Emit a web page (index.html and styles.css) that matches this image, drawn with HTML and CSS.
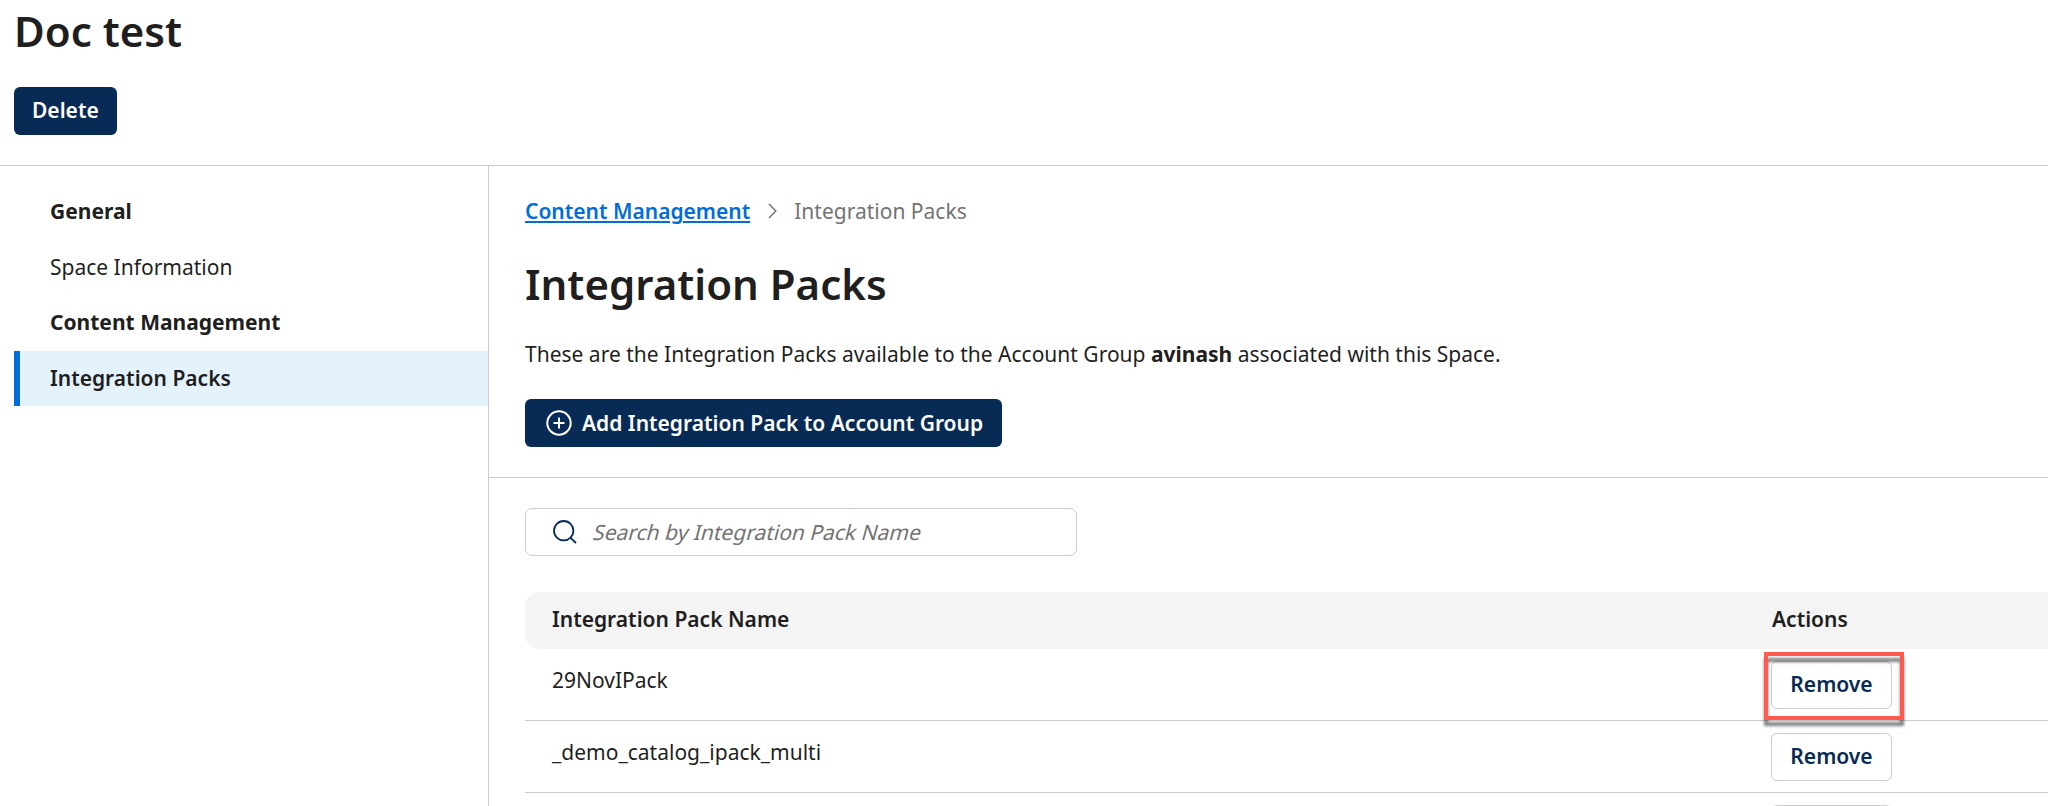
FILE: index.html
```html
<!DOCTYPE html>
<html lang="en">
<head>
<meta charset="utf-8">
<title>Doc test</title>
<link rel="stylesheet" href="styles.css">
</head>
<body>
<header class="page-header">
  <h1 class="title">Doc test</h1>
  <button class="btn btn-primary">Delete</button>
</header>
<div class="layout">
  <nav class="sidebar">
    <div class="nav-item nav-heading">General</div>
    <div class="nav-item">Space Information</div>
    <div class="nav-item nav-heading">Content Management</div>
    <div class="nav-item nav-selected">Integration Packs</div>
  </nav>
  <main class="main">
    <section class="intro">
      <div class="breadcrumb">
        <a class="crumb-link" href="#">Content Management</a>
        <svg class="chevron" width="9" height="16" viewBox="0 0 9 16"><path d="M1 1l6.8 7L1 15"/></svg>
        <span>Integration Packs</span>
      </div>
      <h2 class="title section-title">Integration Packs</h2>
      <p class="description">These are the Integration Packs available to the Account Group <b>avinash</b> associated with this Space.</p>
      <button class="btn btn-primary btn-add">
        <svg class="plus" width="26" height="26" viewBox="0 0 26 26"><circle cx="13" cy="13" r="11.7"/><path d="M13 7.5v11M7.5 13h11"/></svg>
        <span>Add Integration Pack to Account Group</span>
      </button>
    </section>
    <section class="listing">
      <div class="search">
        <svg class="magnifier" width="24" height="24" viewBox="0 0 24 24"><circle cx="10.7" cy="10.7" r="9.7"/><path d="M17.5 17.8L23 23"/></svg>
        <span class="placeholder">Search by Integration Pack Name</span>
      </div>
      <div class="table">
        <div class="row row-head"><span>Integration Pack Name</span><span class="actions-head">Actions</span></div>
        <div class="row"><span class="name">29NovIPack</span><div class="action"><button class="btn btn-outline">Remove</button><div class="highlight"></div></div></div>
        <div class="row"><span class="name">_demo_catalog_ipack_multi</span><div class="action"><button class="btn btn-outline">Remove</button></div></div>
        <div class="row"><span class="name"></span><div class="action"><button class="btn btn-outline"></button></div></div>
      </div>
    </section>
  </main>
</div>
</body>
</html>
```
FILE: styles.css
```css
* { box-sizing: border-box; }
html, body { height: 806px; overflow: hidden; }
body {
  margin: 0;
  display: flex;
  flex-direction: column;
  background: #fff;
  color: #1f1f1f;
  font: 400 21px/28px "Noto Sans", sans-serif;
}
.page-header {
  height: 166px;
  flex: none;
  padding: 3px 14px 0;
  border-bottom: 1px solid #ccc;
}
.title { margin: 0; font-size: 42px; line-height: 56px; font-weight: 600; }
.btn {
  display: flex;
  align-items: center;
  height: 48px;
  border: 0;
  border-radius: 6px;
  font: 600 21px/28px "Noto Sans", sans-serif;
  white-space: nowrap;
}
.btn-primary { margin-top: 28px; padding: 0 18px 2px; background: #072b55; color: #fff; }
.btn-outline { width: 121px; justify-content: center; padding: 0 0 2px; border: 1px solid #ccc; background: #fff; color: #072b55; }
.layout { display: flex; flex: 1; min-height: 0; overflow: hidden; }
.sidebar { width: 489px; flex: none; padding: 18px 0 0 14px; border-right: 1px solid #ccc; }
.nav-item { height: 55.6px; padding: 13.4px 0 0 36px; }
.nav-heading { padding-top: 13px; font-weight: 700; }
.nav-selected {
  height: 55px;
  padding-left: 30px;
  border-left: 6px solid #006dda;
  background: #e4f2fc;
  font-weight: 600;
}
.main { flex: 1; min-width: 0; overflow: hidden; }
.intro { height: 312px; padding: 31px 36px 0; border-bottom: 1px solid #ccc; }
.breadcrumb { display: flex; align-items: center; color: #737373; }
.crumb-link { color: #006dda; font-weight: 600; text-decoration-thickness: 2px; text-underline-offset: 2px; }
.chevron { margin: 0 17px 0 18px; fill: none; stroke: #737373; stroke-width: 1.5; }
.section-title { margin-top: 31px; }
.description { margin: 28px 0 0; }
.description + .btn { margin-top: 31px; }
.btn-add { width: 477px; padding: 0 18px 1px 21px; gap: 10px; }
.plus { fill: none; stroke: #fff; stroke-width: 2; }
.listing { padding: 30px 0 0 36px; }
.search {
  display: flex;
  align-items: center;
  gap: 17px;
  width: 552px;
  height: 48px;
  padding-left: 27px;
  border: 1px solid #ccc;
  border-radius: 7px;
  color: #737373;
}
/* Upright face slanted, keeping the regular advance widths */
.placeholder { transform: skewX(-15deg); }
.magnifier { fill: none; stroke: #072b55; stroke-width: 1.8; }
.table { margin-top: 36px; }
.row {
  display: grid;
  grid-template-columns: 1219px 1fr;
  height: 72px;
  padding-left: 27px;
  border-bottom: 1px solid #ccc;
}
.row-head {
  height: 57px;
  padding-top: 13px;
  border: 0;
  border-radius: 15px 0 0 15px;
  background: #f4f4f4;
  font-weight: 600;
}
.actions-head { padding-left: 1px; }
.name { padding-top: 17px; }
.action { position: relative; padding-top: 12px; }
/* Callout frame drawn over the first Remove button */
.highlight {
  position: absolute;
  left: -7px;
  top: 3px;
  width: 140px;
  height: 68px;
  border: 4px solid #ff5a4d;
  filter: drop-shadow(0 6px 1.5px rgba(0, 0, 0, .5));
}
```
